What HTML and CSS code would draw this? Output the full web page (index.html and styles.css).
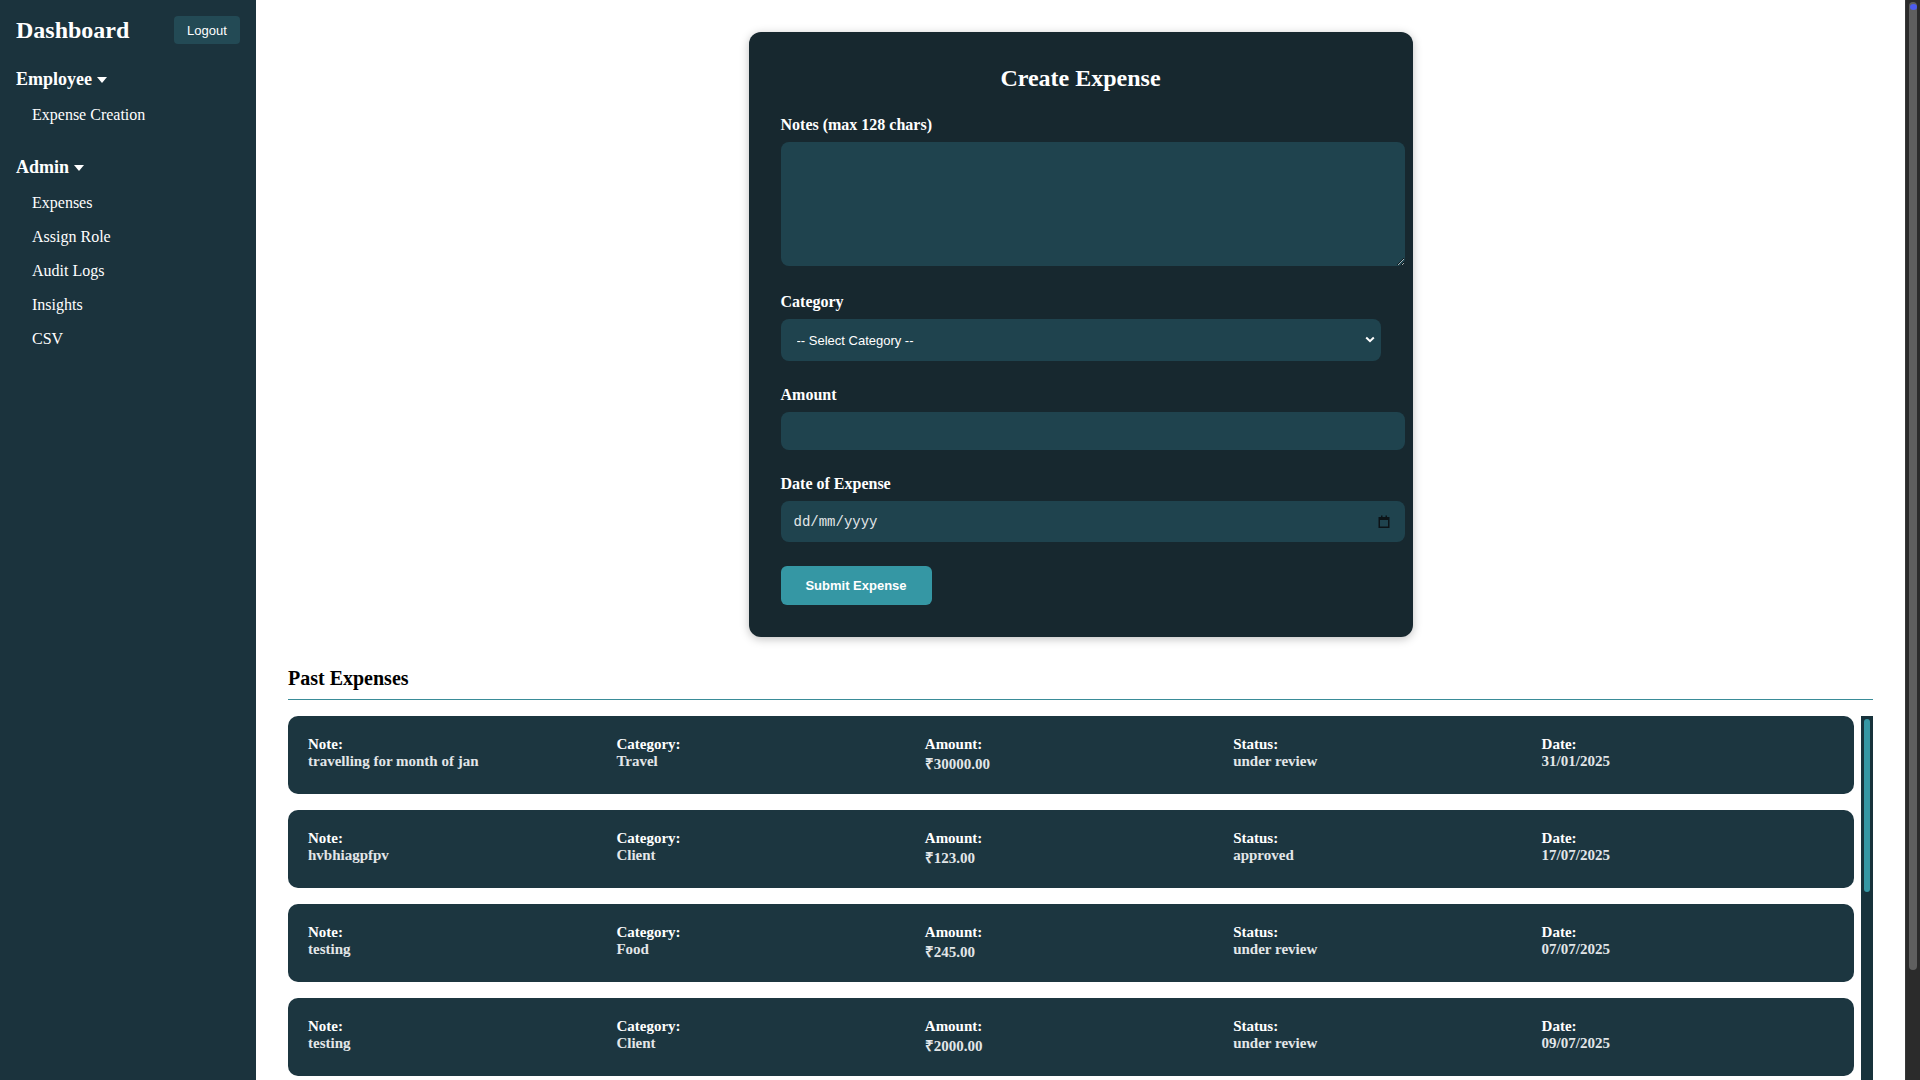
FILE: index.html
```html
<!DOCTYPE html>
<html lang="en">
<head>
<meta charset="utf-8">
<title>Dashboard</title>
<link rel="stylesheet" href="styles.css">
</head>
<body>
<div class="app">
  <aside class="sidebar">
    <div class="side-head">
      <h2 class="brand">Dashboard</h2>
      <button class="logout" type="button">Logout</button>
    </div>
    <div class="section">
      <div class="section-title">Employee <svg class="caret" width="10" height="6" viewBox="0 0 10 6"><path d="M0 0h10L5 6z" fill="#fff"/></svg></div>
      <ul class="nav">
        <li>Expense Creation</li>
      </ul>
    </div>
    <div class="section">
      <div class="section-title">Admin <svg class="caret" width="10" height="6" viewBox="0 0 10 6"><path d="M0 0h10L5 6z" fill="#fff"/></svg></div>
      <ul class="nav">
        <li>Expenses</li>
        <li>Assign Role</li>
        <li>Audit Logs</li>
        <li>Insights</li>
        <li>CSV</li>
      </ul>
    </div>
  </aside>

  <main class="main">
    <form class="form-card">
      <h2 class="form-title">Create Expense</h2>
      <div class="field field-notes">
        <label>Notes (max 128 chars)</label>
        <textarea class="ctl textarea"></textarea>
      </div>
      <div class="field field-mid">
        <label>Category</label>
        <div class="select-wrap">
          <select class="select">
            <option>-- Select Category --</option>
            <option>Travel</option>
            <option>Food</option>
            <option>Client</option>
          </select>
          <svg class="chev" width="10" height="7" viewBox="0 0 10 7"><path d="M1.2 1.5L5 5.2l3.8-3.7" stroke="#fff" stroke-width="2" fill="none"/></svg>
        </div>
      </div>
      <div class="field field-mid">
        <label>Amount</label>
        <input class="ctl input amount" type="text">
      </div>
      <div class="field">
        <label>Date of Expense</label>
        <div class="date-wrap">
          <input class="ctl input date" type="text" placeholder="dd/mm/yyyy">
          <svg class="cal" width="12" height="13" viewBox="0 0 12 13"><rect x="1.25" y="2.75" width="9.5" height="9.5" fill="none" stroke="#0c1418" stroke-width="1.5"/><rect x="1" y="2.5" width="10" height="2.5" fill="#0c1418"/><rect x="3" y="0.5" width="1.5" height="2.5" fill="#0c1418"/><rect x="7.5" y="0.5" width="1.5" height="2.5" fill="#0c1418"/></svg>
        </div>
      </div>
      <button class="submit" type="button">Submit Expense</button>
    </form>

    <section class="past">
      <h3 class="past-title">Past Expenses</h3>
      <div class="list">
        <div class="cards">
          <div class="exp"><div><b>Note:</b><span>travelling for month of jan</span></div><div><b>Category:</b><span>Travel</span></div><div><b>Amount:</b><span>₹30000.00</span></div><div><b>Status:</b><span>under review</span></div><div><b>Date:</b><span>31/01/2025</span></div></div>
          <div class="exp"><div><b>Note:</b><span>hvbhiagpfpv</span></div><div><b>Category:</b><span>Client</span></div><div><b>Amount:</b><span>₹123.00</span></div><div><b>Status:</b><span>approved</span></div><div><b>Date:</b><span>17/07/2025</span></div></div>
          <div class="exp"><div><b>Note:</b><span>testing</span></div><div><b>Category:</b><span>Food</span></div><div><b>Amount:</b><span>₹245.00</span></div><div><b>Status:</b><span>under review</span></div><div><b>Date:</b><span>07/07/2025</span></div></div>
          <div class="exp"><div><b>Note:</b><span>testing</span></div><div><b>Category:</b><span>Client</span></div><div><b>Amount:</b><span>₹2000.00</span></div><div><b>Status:</b><span>under review</span></div><div><b>Date:</b><span>09/07/2025</span></div></div>
        </div>
        <div class="list-bar"><div class="list-thumb"></div></div>
      </div>
    </section>
  </main>

  <div class="page-bar"><div class="page-thumb"><span class="page-dot"></span></div></div>
</div>
</body>
</html>
```
FILE: styles.css
```css
html, body {
  margin: 0;
  padding: 0;
}
body {
  font-family: "Liberation Serif", "Times New Roman", serif;
  background: #ffffff;
  color: #000;
}
.app {
  display: flex;
  height: 100vh;
  overflow: hidden;
}

/* Sidebar */
.sidebar {
  width: 256px;
  flex: none;
  box-sizing: border-box;
  padding: 16px;
  background: #1b333d;
  color: #fff;
}
.side-head {
  display: flex;
  align-items: center;
  justify-content: space-between;
  height: 28px;
  margin-bottom: 25px;
}
.brand {
  margin: 0;
  font-size: 24px;
  line-height: 28px;
  font-weight: bold;
}
.logout {
  width: 66px;
  height: 28px;
  padding: 0;
  border: none;
  border-radius: 4px;
  background: #234a55;
  color: #fff;
  font-family: "Liberation Sans", Arial, sans-serif;
  font-size: 13px;
}
.section {
  margin-bottom: 25px;
}
.section-title {
  display: flex;
  align-items: center;
  gap: 5px;
  font-size: 18px;
  line-height: 20px;
  font-weight: bold;
  margin-bottom: 9px;
}
.caret {
  margin-top: 2px;
}
.nav {
  list-style: none;
  margin: 0;
  padding: 0;
}
.nav li {
  padding: 8px 16px;
  font-size: 16px;
  line-height: 18px;
}

/* Main */
.main {
  flex: 1;
  min-width: 0;
  box-sizing: border-box;
  padding: 32px;
  overflow: hidden;
}
.form-card {
  width: 600px;
  margin: 0 auto;
  padding: 32px;
  background: #17282f;
  border-radius: 12px;
  box-shadow: 0 2px 10px rgba(0, 0, 0, 0.25);
  color: #fff;
}
.form-title {
  margin: 0 0 24px;
  text-align: center;
  font-size: 24px;
  line-height: 28px;
}
.field {
  margin-bottom: 24px;
}
.field-notes {
  margin-bottom: 27px;
}
.field-mid {
  margin-bottom: 25px;
}
.field label {
  display: block;
  font-size: 16px;
  line-height: 18px;
  font-weight: bold;
  margin-bottom: 8px;
}
.ctl {
  display: block;
  box-sizing: border-box;
  width: calc(100% + 24px);
  border: none;
  border-radius: 8px;
  background: #1f434e;
  color: #fff;
  outline: none;
}
.textarea {
  height: 124px;
  padding: 12px;
  resize: vertical;
  font-family: "Liberation Sans", Arial, sans-serif;
  font-size: 14px;
}
.select-wrap {
  position: relative;
  width: 100%;
  height: 42px;
}
.select {
  -webkit-appearance: none;
  appearance: none;
  width: 100%;
  height: 100%;
  box-sizing: border-box;
  padding: 0 16px;
  border: none;
  border-radius: 8px;
  background: #1f434e;
  color: #fff;
  font-family: "Liberation Sans", Arial, sans-serif;
  font-size: 13px;
  outline: none;
}
.chev {
  position: absolute;
  right: 6px;
  top: 17px;
  pointer-events: none;
}
.input {
  padding: 0 12px;
  font-family: "Liberation Sans", Arial, sans-serif;
  font-size: 14px;
}
.amount {
  height: 38px;
}
.date-wrap {
  position: relative;
  width: calc(100% + 24px);
}
.date {
  width: 100%;
  height: 41px;
  padding: 0 12px 0 13px;
  font-family: "Liberation Mono", "Courier New", monospace;
  font-size: 14px;
}
.date::placeholder {
  color: #e3e7e9;
  opacity: 1;
}
.cal {
  position: absolute;
  right: 15px;
  top: 14px;
  pointer-events: none;
}
.submit {
  display: block;
  width: 151px;
  height: 39px;
  padding: 0;
  border: none;
  border-radius: 6px;
  background: #3597a4;
  color: #fff;
  font-family: "Liberation Sans", Arial, sans-serif;
  font-size: 13px;
  font-weight: bold;
}

/* Past expenses */
.past {
  margin-top: 30px;
}
.past-title {
  margin: 0 0 16px;
  padding-bottom: 9px;
  border-bottom: 1px solid #3a8c98;
  font-size: 20px;
  line-height: 23px;
  font-weight: bold;
}
.list {
  display: flex;
  gap: 7px;
  height: 452px;
}
.cards {
  flex: 1;
  min-width: 0;
  display: flex;
  flex-direction: column;
  gap: 16px;
}
.list-bar {
  flex: none;
  width: 12px;
  box-sizing: border-box;
  padding: 3px;
  background: #17323b;
}
.list-thumb {
  height: 173px;
  border-radius: 3px;
  background: #3597a4;
}
.exp {
  flex: none;
  display: grid;
  grid-template-columns: repeat(5, 1fr);
  column-gap: 16px;
  height: 78px;
  box-sizing: border-box;
  padding: 20px 20px 16px;
  border-radius: 10px;
  background: #1c3640;
  color: #fff;
  font-size: 15px;
  font-weight: bold;
}
.exp b {
  display: block;
  line-height: 17px;
}
.exp span {
  display: block;
  color: #e2e6e8;
}

/* Page scrollbar */
.page-bar {
  flex: none;
  width: 15px;
  box-sizing: border-box;
  padding: 2px 3px 0 3px;
  background: #2b2b2b;
  border-left: 1px solid #383838;
}
.page-thumb {
  position: relative;
  height: 968px;
  border-radius: 5px;
  background: #5f5f5f;
}
.page-dot {
  position: absolute;
  left: 1px;
  top: 2px;
  width: 7px;
  height: 6px;
  border-radius: 50%;
  background: #4d5cf0;
}
```
